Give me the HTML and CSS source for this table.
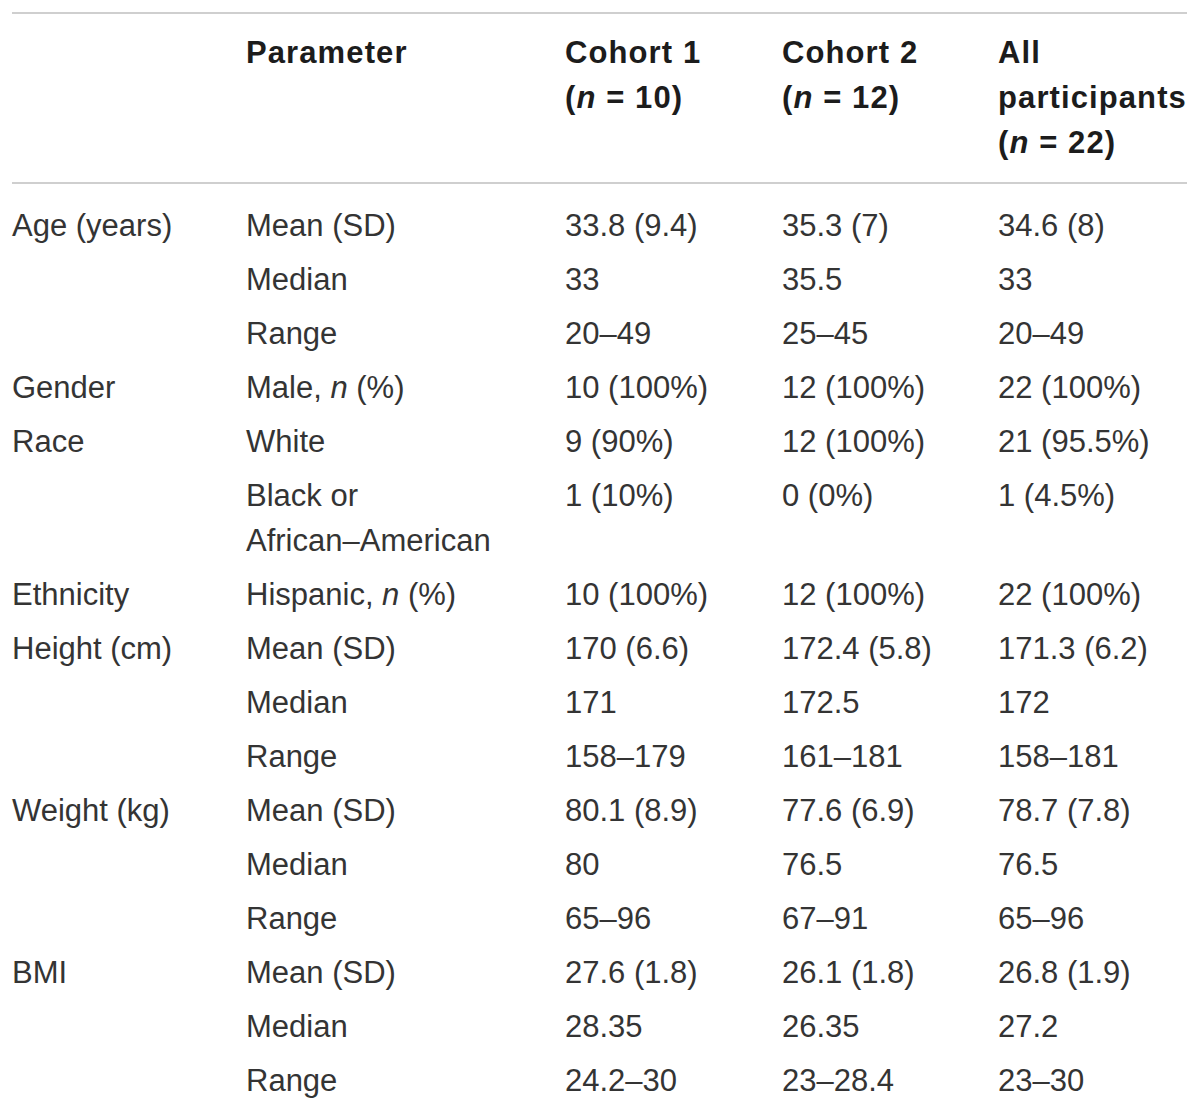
FILE: index.html
```html
<!DOCTYPE html>
<html lang="en">
<head>
<meta charset="utf-8">
<title>Participant characteristics</title>
<link rel="stylesheet" href="styles.css">
</head>
<body>
<table class="data">
  <colgroup>
    <col class="c1"><col class="c2"><col class="c3"><col class="c4"><col class="c5">
  </colgroup>
  <thead>
    <tr>
      <th></th>
      <th>Parameter</th>
      <th>Cohort 1<br>(<i>n</i> = 10)</th>
      <th>Cohort 2<br>(<i>n</i> = 12)</th>
      <th>All<br>participants<br>(<i>n</i> = 22)</th>
    </tr>
  </thead>
  <tbody>
    <tr class="first"><td>Age (years)</td><td>Mean (SD)</td><td>33.8 (9.4)</td><td>35.3 (7)</td><td>34.6 (8)</td></tr>
    <tr><td></td><td>Median</td><td>33</td><td>35.5</td><td>33</td></tr>
    <tr><td></td><td>Range</td><td>20–49</td><td>25–45</td><td>20–49</td></tr>
    <tr><td>Gender</td><td>Male, <i>n</i> (%)</td><td>10 (100%)</td><td>12 (100%)</td><td>22 (100%)</td></tr>
    <tr><td>Race</td><td>White</td><td>9 (90%)</td><td>12 (100%)</td><td>21 (95.5%)</td></tr>
    <tr><td></td><td>Black or<br>African–American</td><td>1 (10%)</td><td>0 (0%)</td><td>1 (4.5%)</td></tr>
    <tr><td>Ethnicity</td><td>Hispanic, <i>n</i> (%)</td><td>10 (100%)</td><td>12 (100%)</td><td>22 (100%)</td></tr>
    <tr><td>Height (cm)</td><td>Mean (SD)</td><td>170 (6.6)</td><td>172.4 (5.8)</td><td>171.3 (6.2)</td></tr>
    <tr><td></td><td>Median</td><td>171</td><td>172.5</td><td>172</td></tr>
    <tr><td></td><td>Range</td><td>158–179</td><td>161–181</td><td>158–181</td></tr>
    <tr><td>Weight (kg)</td><td>Mean (SD)</td><td>80.1 (8.9)</td><td>77.6 (6.9)</td><td>78.7 (7.8)</td></tr>
    <tr><td></td><td>Median</td><td>80</td><td>76.5</td><td>76.5</td></tr>
    <tr><td></td><td>Range</td><td>65–96</td><td>67–91</td><td>65–96</td></tr>
    <tr><td>BMI</td><td>Mean (SD)</td><td>27.6 (1.8)</td><td>26.1 (1.8)</td><td>26.8 (1.9)</td></tr>
    <tr><td></td><td>Median</td><td>28.35</td><td>26.35</td><td>27.2</td></tr>
    <tr><td></td><td>Range</td><td>24.2–30</td><td>23–28.4</td><td>23–30</td></tr>
  </tbody>
</table>
</body>
</html>
```
FILE: styles.css
```css
html, body {
  margin: 0;
  padding: 0;
  background: #ffffff;
}

body {
  padding: 12px 0 0 12px;
  font-family: "Liberation Sans", Arial, Helvetica, sans-serif;
  color: #343434;
}

.data {
  border-collapse: collapse;
  table-layout: fixed;
  width: 1175px;
  font-size: 31px;
  line-height: 45px;
}

.c1 { width: 234px; }
.c2 { width: 319px; }
.c3 { width: 217px; }
.c4 { width: 216px; }
.c5 { width: 189px; }

.data th,
.data td {
  padding: 0;
  text-align: left;
  vertical-align: top;
  white-space: nowrap;
}

.data thead th {
  font-weight: bold;
  color: #1c1c1c;
  letter-spacing: 1.1px;
  padding-top: 16px;
  padding-bottom: 17px;
  border-top: 2px solid #cfcfcf;
  border-bottom: 2px solid #cfcfcf;
}

.data tbody td {
  padding-top: 4px;
  padding-bottom: 5px;
}

.data tbody tr.first td {
  padding-top: 19px;
}

.data i {
  font-style: italic;
}
```
